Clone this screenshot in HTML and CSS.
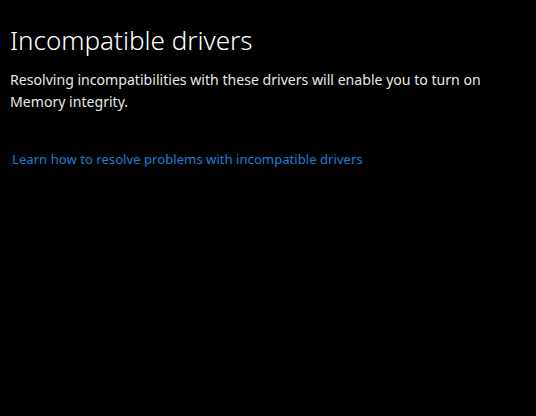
FILE: index.html
```html
<!DOCTYPE html>
<html lang="en">
<head>
<meta charset="utf-8">
<title>Incompatible drivers</title>
<link rel="stylesheet" href="styles.css">
</head>
<body>
<main class="page">
  <h1 class="title">Incompatible drivers</h1>
  <p class="desc">Resolving incompatibilities with these drivers will enable you to turn on Memory integrity.</p>
  <a class="link" href="#">Learn how to resolve problems with incompatible drivers</a>
</main>
</body>
</html>
```
FILE: styles.css
```css
html, body {
  margin: 0;
  padding: 0;
  background: #000;
  width: 536px;
  height: 416px;
  overflow: hidden;
}
.page {
  padding: 22px 0 0 10px;
  font-family: "Noto Sans", "Open Sans", sans-serif;
  color: #fff;
  display: flex;
  flex-direction: column;
  align-items: flex-start;
}
.title {
  margin: 0;
  font-size: 26px;
  font-weight: 300;
  line-height: 36px;
  color: #fff;
}
.desc {
  margin: 11px 0 0 0;
  font-size: 14.1px;
  line-height: 22px;
  color: #e8e8e8;
  width: 490px;
}
.link {
  margin-top: 37px;
  margin-left: 2px;
  font-size: 13.15px;
  line-height: 18px;
  color: #1a7fd6;
  text-decoration: none;
}
```
